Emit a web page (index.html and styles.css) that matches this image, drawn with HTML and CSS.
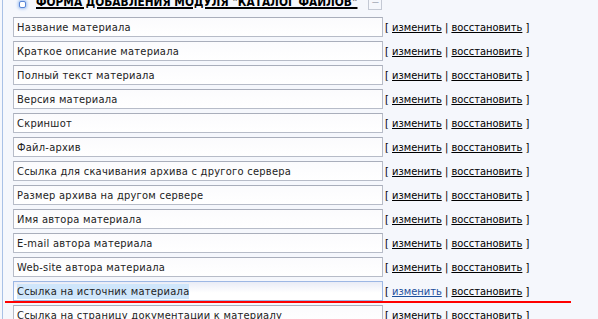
FILE: index.html
```html
<!DOCTYPE html>
<html lang="ru">
<head>
  <meta charset="UTF-8" />
  <title>Форма добавления модуля</title>
  <link rel="stylesheet" href="styles.css">
</head>
<body>
  <div class="panel">
    <h2 class="form-title">
      <span class="bullet"></span>
      <span class="title-text">ФОРМА ДОБАВЛЕНИЯ МОДУЛЯ "КАТАЛОГ ФАЙЛОВ"</span>
      <span class="collapse">−</span>
    </h2>

    <div class="field-list">
      <div class="field-row">
        <input class="field" type="text" value="Название материала">
        <span class="actions">[ <a href="#">изменить</a> | <a href="#">восстановить</a> ]</span>
      </div>
      <div class="field-row">
        <input class="field" type="text" value="Краткое описание материала">
        <span class="actions">[ <a href="#">изменить</a> | <a href="#">восстановить</a> ]</span>
      </div>
      <div class="field-row">
        <input class="field" type="text" value="Полный текст материала">
        <span class="actions">[ <a href="#">изменить</a> | <a href="#">восстановить</a> ]</span>
      </div>
      <div class="field-row">
        <input class="field" type="text" value="Версия материала">
        <span class="actions">[ <a href="#">изменить</a> | <a href="#">восстановить</a> ]</span>
      </div>
      <div class="field-row">
        <input class="field" type="text" value="Скриншот">
        <span class="actions">[ <a href="#">изменить</a> | <a href="#">восстановить</a> ]</span>
      </div>
      <div class="field-row">
        <input class="field" type="text" value="Файл-архив">
        <span class="actions">[ <a href="#">изменить</a> | <a href="#">восстановить</a> ]</span>
      </div>
      <div class="field-row">
        <input class="field" type="text" value="Ссылка для скачивания архива с другого сервера">
        <span class="actions">[ <a href="#">изменить</a> | <a href="#">восстановить</a> ]</span>
      </div>
      <div class="field-row">
        <input class="field" type="text" value="Размер архива на другом сервере">
        <span class="actions">[ <a href="#">изменить</a> | <a href="#">восстановить</a> ]</span>
      </div>
      <div class="field-row">
        <input class="field" type="text" value="Имя автора материала">
        <span class="actions">[ <a href="#">изменить</a> | <a href="#">восстановить</a> ]</span>
      </div>
      <div class="field-row">
        <input class="field" type="text" value="E-mail автора материала">
        <span class="actions">[ <a href="#">изменить</a> | <a href="#">восстановить</a> ]</span>
      </div>
      <div class="field-row">
        <input class="field" type="text" value="Web-site автора материала">
        <span class="actions">[ <a href="#">изменить</a> | <a href="#">восстановить</a> ]</span>
      </div>
      <div class="field-row active">
        <div class="field focused"><span class="selected">Ссылка на источник материала</span></div>
        <span class="actions">[ <a href="#" class="hover">изменить</a> | <a href="#">восстановить</a> ]</span>
      </div>
      <div class="field-row">
        <input class="field" type="text" value="Ссылка на страницу документации к материалу">
        <span class="actions">[ <a href="#">изменить</a> | <a href="#">восстановить</a> ]</span>
      </div>
    </div>
  </div>
</body>
</html>
```

FILE: styles.css
```css
body {
  margin: 0;
  background: #f5f7fc;
  font-family: 'DejaVu Sans Condensed', 'DejaVu Sans', sans-serif;
  font-size: 11px;
  color: #000;
  overflow: hidden;
}

.panel {
  margin-left: 2px;
  border-left: 1px solid #a9c1e6;
  padding-left: 10px;
}

.form-title {
  display: flex;
  align-items: center;
  margin: -13px 0 0 0;
  height: 30px;
  font-size: 11.8px;
  font-weight: bold;
}

.bullet {
  width: 5px;
  height: 5px;
  margin-left: 6px;
  margin-right: 10px;
  margin-top: 4px;
  background: #ffffff;
  border: 1px solid #5a86d6;
  border-radius: 2px;
  box-shadow: 0 0 3px 1px #9fc0f2;
}

.title-text {
  text-decoration: underline;
  text-decoration-thickness: 2px;
  text-underline-offset: 1px;
}

.collapse {
  width: 12px;
  height: 12px;
  margin-left: 11px;
  margin-top: 2px;
  border: 1px solid #c4c9d4;
  color: #b0b5c0;
  font-weight: normal;
  line-height: 12px;
  text-align: center;
  font-size: 11px;
}

.field-list {
  display: flex;
  flex-direction: column;
  gap: 4px;
}

.field-row {
  display: flex;
  align-items: center;
  height: 20px;
}

.field {
  box-sizing: border-box;
  width: 370px;
  height: 20px;
  margin: 0;
  padding: 0 3px;
  border: 1px solid #b7bcc8;
  border-top-color: #a9aebb;
  background: linear-gradient(#fbfbfd, #ffffff);
  font: inherit;
  letter-spacing: 0.25px;
  color: #222;
  outline: none;
}

.field.focused {
  display: flex;
  align-items: center;
  border-color: #9cb7e4;
  background: linear-gradient(#e9ecf6, #ffffff 60%);
}

.selected {
  background: #cfe6fb;
  padding: 1px 0;
}

.actions {
  margin-left: 2px;
  white-space: nowrap;
}

.actions a {
  color: #000;
}

.actions a.hover {
  color: #1d4f9c;
}

.field-row.active {
  position: relative;
}

.field-row.active::after {
  content: "";
  position: absolute;
  left: -8px;
  top: 20px;
  width: 566px;
  height: 2px;
  background: #ff0000;
}
```
